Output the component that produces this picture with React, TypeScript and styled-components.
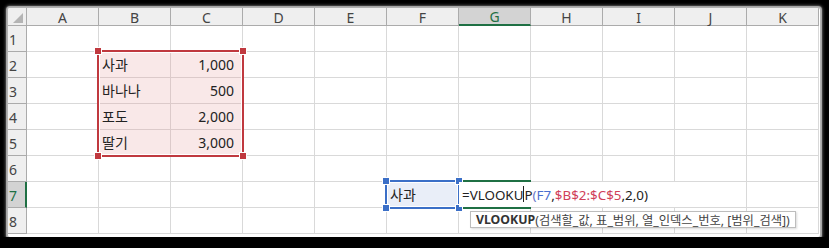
import React from 'react'
import styled, { createGlobalStyle, css } from 'styled-components'

const GlobalStyle = createGlobalStyle`
  html, body {
    margin: 0;
    padding: 0;
    background: #000;
  }
  body {
    font-family: "Noto Sans", "Noto Sans CJK KR", sans-serif;
  }
`

const FONT = `"Noto Sans", "Noto Sans CJK KR", sans-serif`
const GREEN = '#1f7044'
const RED = '#c0393f'
const BLUE = '#3b6fc7'

const COLS = ['A', 'B', 'C', 'D', 'E', 'F', 'G', 'H', 'I', 'J', 'K']
const ROWS = [1, 2, 3, 4, 5, 6, 7, 8]

const DATA: Record<string, { text: string; right?: boolean }> = {
  B2: { text: '사과' },
  C2: { text: '1,000', right: true },
  B3: { text: '바나나' },
  C3: { text: '500', right: true },
  B4: { text: '포도' },
  C4: { text: '2,000', right: true },
  B5: { text: '딸기' },
  C5: { text: '3,000', right: true },
  F7: { text: '사과' },
}

const Frame = styled.div`
  margin: 8px 0 0 8px;
  width: 812px;
  height: 229px;
  background: #fff;
  overflow: hidden;
  border-radius: 2px;
  box-shadow: 0 0 1px 2px rgba(190, 190, 190, 0.9), 0 0 3px 3px rgba(120, 120, 120, 0.6);
`

const Sheet = styled.div`
  display: grid;
  grid-template-columns: 19px repeat(11, 72px);
  grid-template-rows: 18px repeat(8, 26px);
  position: relative;
  font-family: ${FONT};
`

type At = { $col: number; $row: number; $colEnd?: number; $rowEnd?: number }

const place = css<At>`
  grid-column: ${({ $col, $colEnd }) => `${$col} / ${$colEnd ?? $col + 1}`};
  grid-row: ${({ $row, $rowEnd }) => `${$row} / ${$rowEnd ?? $row + 1}`};
`

const Corner = styled.div<At>`
  ${place}
  background: #efefef;
  border-right: 1px solid #ababab;
  border-bottom: 1px solid #ababab;
  position: relative;
  &::after {
    content: '';
    position: absolute;
    right: 3px;
    bottom: 2px;
    width: 0;
    height: 0;
    border-left: 10px solid transparent;
    border-bottom: 10px solid #b4b4b4;
  }
`

const ColHead = styled.div<At & { $active?: boolean }>`
  ${place}
  display: flex;
  align-items: center;
  justify-content: center;
  font-size: 14px;
  padding-top: 1px;
  color: ${({ $active }) => ($active ? GREEN : '#444')};
  background: ${({ $active }) => ($active ? '#d3d3d3' : '#efefef')};
  border-right: 1px solid #ababab;
  border-bottom: ${({ $active }) => ($active ? `2px solid ${GREEN}` : '1px solid #ababab')};
  box-sizing: border-box;
`

const RowHead = styled.div<At & { $active?: boolean }>`
  ${place}
  display: flex;
  align-items: flex-end;
  justify-content: flex-start;
  padding: 0 0 3px 1px;
  font-size: 14px;
  line-height: 16px;
  color: ${({ $active }) => ($active ? GREEN : '#444')};
  background: ${({ $active }) => ($active ? '#d3d3d3' : '#efefef')};
  border-right: ${({ $active }) => ($active ? `2px solid ${GREEN}` : '1px solid #ababab')};
  border-bottom: 1px solid #ababab;
  box-sizing: border-box;
  overflow: hidden;
`

const Cell = styled.div<At & { $fill?: string; $line?: string; $right?: boolean }>`
  ${place}
  display: flex;
  align-items: flex-end;
  justify-content: ${({ $right }) => ($right ? 'flex-end' : 'flex-start')};
  padding: 0 8px 3px 3px;
  font-size: 14px;
  line-height: 18px;
  color: #222;
  background: ${({ $fill }) => $fill ?? '#fff'};
  border-right: 1px solid ${({ $line }) => $line ?? '#d9d9d9'};
  border-bottom: 1px solid ${({ $line }) => $line ?? '#d9d9d9'};
  box-sizing: border-box;
  white-space: nowrap;
`

const RangeBox = styled.div<At & { $color: string }>`
  ${place}
  position: relative;
  margin: -2px -1px -1px -2px;
  border: 2px solid ${({ $color }) => $color};
  box-shadow: inset 0 0 0 1px #fff;
  pointer-events: none;
`

const Handle = styled.span<{ $color: string; $x: 'l' | 'r'; $y: 't' | 'b' }>`
  position: absolute;
  width: 6px;
  height: 6px;
  background: ${({ $color }) => $color};
  border: 1px solid #fff;
  ${({ $x }) => ($x === 'l' ? 'left: -5px;' : 'right: -5px;')}
  ${({ $y }) => ($y === 't' ? 'top: -5px;' : 'bottom: -5px;')}
`

const EditArea = styled.div<At>`
  ${place}
  position: relative;
  background: #fff;
  margin: 0 0 1px 0;
  display: flex;
  align-items: flex-end;
  padding: 0 0 3px 3px;
  font-size: 13.4px;
  line-height: 18px;
  color: #222;
  white-space: nowrap;
`

const ActiveBox = styled.div<At>`
  ${place}
  margin: -2px 0 -1px 0;
  border: 2px solid ${GREEN};
  border-right: none;
  pointer-events: none;
`

const Ref = styled.span<{ $color: string }>`
  color: ${({ $color }) => $color};
`

const Caret = styled.span`
  display: inline-block;
  width: 1px;
  height: 16px;
  margin: 0 0 -2px 0;
  background: #222;
  vertical-align: baseline;
  align-self: center;
`

const Tip = styled.div`
  position: absolute;
  left: 462px;
  top: 203px;
  padding: 0 5px;
  height: 15px;
  display: flex;
  align-items: center;
  background: #fff;
  border: 1px solid #bdbdbd;
  box-shadow: 1px 1px 2px rgba(0, 0, 0, 0.15);
  font-family: ${FONT};
  font-size: 12.3px;
  color: #444;
  white-space: nowrap;
  b {
    font-weight: 700;
    color: #333;
  }
`

const inRange = (c: number, r: number) => c >= 2 && c <= 3 && r >= 2 && r <= 5

export default function App() {
  return (
    <>
      <GlobalStyle />
      <Frame>
        <Sheet>
          <Corner $col={1} $row={1} />
          {COLS.map((c, i) => (
            <ColHead key={c} $col={i + 2} $row={1} $active={c === 'G'}>
              {c}
            </ColHead>
          ))}
          {ROWS.map((r) => (
            <React.Fragment key={r}>
              <RowHead $col={1} $row={r + 1} $active={r === 7}>
                {r}
              </RowHead>
              {COLS.map((c, i) => {
                const d = DATA[`${c}${r}`]
                const pink = inRange(i + 1, r)
                return (
                  <Cell
                    key={c}
                    $col={i + 2}
                    $row={r + 1}
                    $right={d?.right}
                    $fill={pink ? '#f9e8e8' : c === 'F' && r === 7 ? '#e9eef8' : undefined}
                    $line={pink ? '#dccaca' : undefined}
                  >
                    {d?.text}
                  </Cell>
                )
              })}
            </React.Fragment>
          ))}

          <RangeBox $col={3} $colEnd={5} $row={3} $rowEnd={7} $color={RED}>
            <Handle $color={RED} $x="l" $y="t" />
            <Handle $color={RED} $x="r" $y="t" />
            <Handle $color={RED} $x="l" $y="b" />
            <Handle $color={RED} $x="r" $y="b" />
          </RangeBox>

          <RangeBox $col={7} $row={8} $color={BLUE}>
            <Handle $color={BLUE} $x="l" $y="t" />
            <Handle $color={BLUE} $x="r" $y="t" />
            <Handle $color={BLUE} $x="l" $y="b" />
            <Handle $color={BLUE} $x="r" $y="b" />
          </RangeBox>

          <EditArea $col={8} $colEnd={11} $row={8}>
            =VLOOKU
            <Caret />P<Ref $color="#6b78c9">(</Ref>
            <Ref $color="#4a6fd0">F7</Ref>,<Ref $color="#d0405a">$B$2:$C$5</Ref>,2,0)
          </EditArea>
          <ActiveBox $col={8} $row={8} />

          <Tip>
            <b>VLOOKUP</b>(검색할_값, 표_범위, 열_인덱스_번호, [범위_검색])
          </Tip>
        </Sheet>
      </Frame>
    </>
  )
}
